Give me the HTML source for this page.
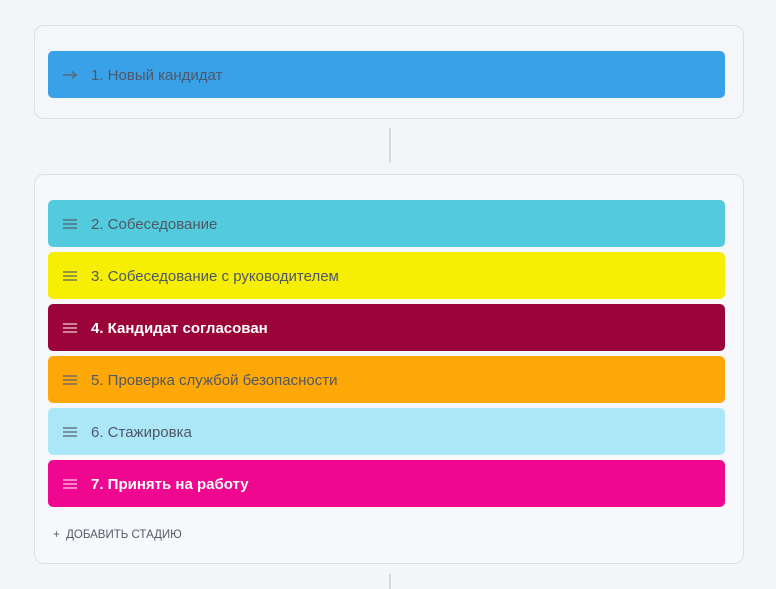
<!DOCTYPE html>
<html><head><meta charset="utf-8"><style>
body{margin:0;width:776px;height:589px;background:#f3f5f9;font-family:"Liberation Sans","DejaVu Sans",sans-serif;position:relative;overflow:hidden}
.box{position:absolute;left:34px;width:710px;border:1px solid #dcdfe4;border-radius:10px;background:#f5f6f9;box-sizing:border-box}
.bar{position:absolute;left:13px;width:677px;height:47px;border-radius:5px;font-size:15px;color:#4f5866;line-height:50px;padding-left:43px;box-sizing:border-box}
.bar.w{color:#fff;font-weight:bold}
.ic{position:absolute;left:15px;top:19px;width:14px}
.ic i{display:block;height:2px;background:rgba(83,92,105,.6);margin-bottom:2px}
.w .ic i{background:rgba(255,255,255,.5)}
.line{position:absolute;left:389px;width:2px;background:#d5d8dd}
</style></head><body>
<div class="box" style="top:25px;height:94px">
<div class="bar" style="top:25px;background:#39a1e8"><svg style="position:absolute;left:14px;top:18px" width="16" height="12"><path d="M1 6H14M10 2.5L14 6L10 9.5" stroke="#5a6a7c" stroke-width="1.5" fill="none"/></svg>1. Новый кандидат</div>
</div>
<div class="line" style="top:128px;height:35px"></div>
<div class="box" style="top:174px;height:390px;background:#f7f8fb">
<div class="bar" style="top:25px;background:#53cbdc"><span class="ic"><i></i><i></i><i></i></span>2. Собеседование</div>
<div class="bar" style="top:77px;background:#f6ef04"><span class="ic"><i></i><i></i><i></i></span>3. Собеседование с руководителем</div>
<div class="bar w" style="top:129px;background:#9b0439"><span class="ic"><i></i><i></i><i></i></span>4. Кандидат согласован</div>
<div class="bar" style="top:181px;background:#fea808"><span class="ic"><i></i><i></i><i></i></span>5. Проверка службой безопасности</div>
<div class="bar" style="top:233px;background:#ace7f8"><span class="ic"><i></i><i></i><i></i></span>6. Стажировка</div>
<div class="bar w" style="top:285px;background:#ef078f"><span class="ic"><i></i><i></i><i></i></span>7. Принять на работу</div>
<div style="position:absolute;left:18px;top:354px;font-size:11.5px;color:#535c69">+&nbsp; ДОБАВИТЬ СТАДИЮ</div>
</div>
<div class="line" style="top:574px;height:15px"></div>
</body></html>
